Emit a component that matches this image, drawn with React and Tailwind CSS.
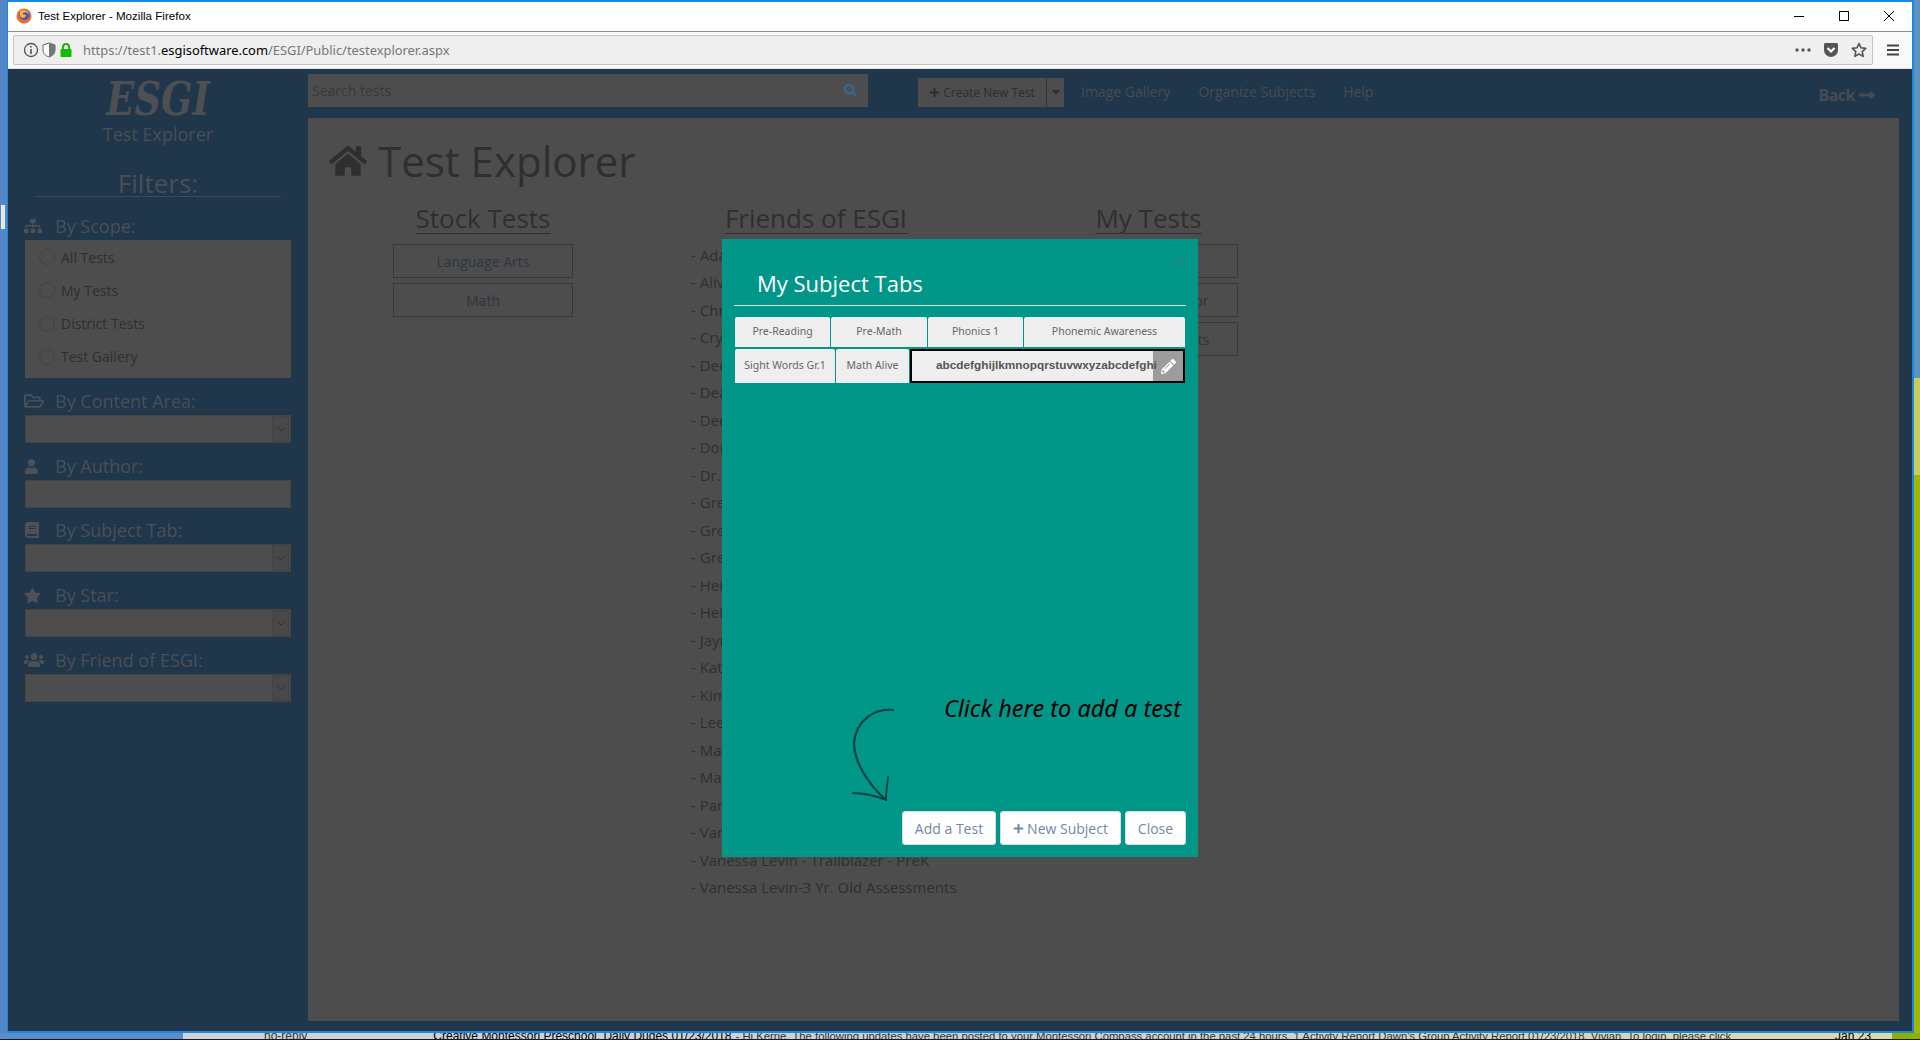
import React from "react";
import { FaSitemap, FaRegFolderOpen, FaUser, FaBook, FaStar, FaUsers, FaHome, FaSearch, FaPlus, FaPencilAlt, FaLongArrowAltRight } from "react-icons/fa";

const friends = ["Adam", "Alivia", "Christine", "Crystal", "Deedee", "Deanna", "Deena", "Donna", "Dr. Jean", "Greg", "Gretchen", "Greta", "Heidi", "Heidi", "Jayme", "Katie", "Kim", "Lee", "Mary", "Marsha", "Pam", "Vanessa"];

function Caret() {
  return (
    <div className="ml-auto w-[17px] h-[26px] border border-[#434343] bg-[#484848] flex items-center justify-center">
      <svg width="8" height="5" viewBox="0 0 8 5" fill="none" stroke="#2f2f2f" strokeWidth="1"><path d="M0.5 0.5 4 4 7.5 0.5" /></svg>
    </div>
  );
}

function Label({ icon, text, h = "h-[37px]" }) {
  return (
    <div className={`${h} flex items-end pb-[2px] pl-[16px]`}>
      <div className="flex items-center h-[24px] text-[18px] leading-[24px] text-[#4b4f55]">
        <span className="w-[31px] flex text-[#4d5155]">{icon}</span>
        {text}
      </div>
    </div>
  );
}

function Select() {
  return (
    <div className="ml-[17px] w-[266px] h-[28px] border border-[#434343] bg-[#4d4d4d] flex items-center pr-px">
      <Caret />
    </div>
  );
}

function OutlineButton({ children }) {
  return (
    <div className="w-[180px] h-[34px] mb-[5px] border border-[#2f3a45] flex items-center justify-center text-[14px] text-[#2c3640] whitespace-nowrap overflow-hidden">
      {children}
    </div>
  );
}

function Tab({ w, h, children }) {
  return (
    <div style={{ width: w, height: h }} className="bg-[#eeeeee] rounded-t-[2px] flex items-center justify-center font-['Noto_Sans',sans-serif] text-[10.5px] text-[#666666] whitespace-nowrap">
      {children}
    </div>
  );
}

function FooterButton({ w, children }) {
  return (
    <div style={{ width: w }} className="h-[34px] bg-white rounded-[3px] border border-[#d6dfe6] flex items-center justify-center gap-[3px] text-[14px] text-[#6d8aa6]">
      {children}
    </div>
  );
}

export default function App() {
  return (
    <div className="w-[1920px] h-[1040px] overflow-hidden relative flex flex-col font-['Open_Sans',sans-serif]">
      <div className="flex h-[1033px]">
        {/* left edge of the window behind */}
        <div className="w-[7px] bg-[#5387c6] pt-[205px]">
          <div className="ml-px w-[4px] h-[24px] bg-[#e8e8e8]" />
        </div>

        <div className="w-[1907px] flex flex-col border-l border-r-2 border-b-2 border-[#1a86e0]">
          <div className="h-[2px] bg-[#1a86e0]" />
          {/* title bar */}
          <div className="h-[30px] bg-white border-b border-[#8c8c8c] flex items-center pl-[8px] pr-[17px] pb-px font-['Liberation_Sans',sans-serif] text-[11.6px] text-black">
            <svg width="16" height="16" viewBox="0 0 16 16" className="mr-[6px]">
              <circle cx="8" cy="8" r="7.5" fill="#f2682a" />
              <circle cx="8.5" cy="7" r="5" fill="#3b5fc9" />
              <path d="M4 3 C7 1 12 2 13 6 C11 4 8 4 7 5 C6 6 8 7 10 7 C10 10 6 11 4 8 Z" fill="#ffb52c" />
            </svg>
            Test Explorer - Mozilla Firefox
            <svg width="12" height="12" viewBox="0 0 12 12" className="ml-auto" stroke="#000" fill="none"><path d="M1 6.5H11" /></svg>
            <svg width="12" height="12" viewBox="0 0 12 12" className="ml-[33px]" stroke="#000" fill="none"><rect x="1.5" y="1.5" width="9" height="9" /></svg>
            <svg width="12" height="12" viewBox="0 0 12 12" className="ml-[33px]" stroke="#000" fill="none"><path d="M1 1 11 11M11 1 1 11" /></svg>
          </div>
          {/* toolbar */}
          <div className="h-[37px] bg-[#f9f9fa] border-b border-[#e2e2e2] flex items-center pl-[5px]">
            <div className="w-[1860px] h-[30px] bg-[#efefef] border border-[#c4c4c4] rounded-[2px] flex items-center pl-[9px] pr-[5px] text-[12.9px] font-['Noto_Sans',sans-serif] text-[#74777c]">
              <svg width="16" height="16" viewBox="0 0 16 16" fill="none" stroke="#555"><circle cx="8" cy="8" r="6.5" strokeWidth="1.3" /><path d="M8 7V12M8 4V5.5" strokeWidth="1.6" /></svg>
              <svg width="14" height="16" viewBox="0 0 14 16" className="ml-[3px]"><path d="M7 1 L13 3 V8 C13 12 10 14 7 15 C4 14 1 12 1 8 V3 Z" fill="#fff" stroke="#666" /><path d="M7 1 L13 3 V8 C13 12 10 14 7 15 Z" fill="#777" /></svg>
              <svg width="14" height="16" viewBox="0 0 14 16" className="ml-[3px]"><path d="M4 7V5a3 3 0 0 1 6 0V7" fill="none" stroke="#12bc00" strokeWidth="2" /><rect x="1.5" y="7" width="11" height="8" rx="1" fill="#12bc00" /></svg>
              <span className="ml-[10px] pt-[2px]">https://test1.<span className="text-black">esgisoftware.com</span>/ESGI/Public/testexplorer.aspx</span>
              <svg width="16" height="4" viewBox="0 0 16 4" className="ml-auto" fill="#555"><circle cx="2" cy="2" r="1.7" /><circle cx="8" cy="2" r="1.7" /><circle cx="14" cy="2" r="1.7" /></svg>
              <svg width="16" height="16" viewBox="0 0 16 16" className="ml-[12px]"><path d="M1 2.5C1 1.7 1.7 1 2.5 1H13.5C14.3 1 15 1.7 15 2.5V8C15 12 11.5 15 8 15S1 12 1 8Z" fill="#555" /><path d="M4.5 6 8 9.5 11.5 6" fill="none" stroke="#fff" strokeWidth="2.2" /></svg>
              <svg width="16" height="16" viewBox="0 0 16 16" className="ml-[12px]" fill="none" stroke="#555" strokeWidth="1.6"><path d="M8 1.5 10 5.8 14.7 6.4 11.2 9.6 12.2 14.4 8 12 3.8 14.4 4.8 9.6 1.3 6.4 6 5.8Z" strokeLinejoin="round" /></svg>
            </div>
            <svg width="14" height="14" viewBox="0 0 14 14" className="ml-[13px]" stroke="#444" strokeWidth="2"><path d="M1 2.5H13M1 7H13M1 11.5H13" /></svg>
          </div>

          {/* page, dimmed by the open dialog */}
          <div className="flex-1 bg-[#1f364b] flex min-h-0">
            <aside className="w-[300px] flex flex-col">
              <div className="h-[48px] mt-[6px] flex items-center justify-center font-['DejaVu_Serif',serif] font-bold italic text-[46px] scale-x-[0.8] text-[#4d4f52] leading-none">ESGI</div>
              <div className="h-[22px] flex items-center justify-center text-[18px] text-[#4b4f55]">Test Explorer</div>
              <div className="h-[52px] mx-[27px] border-b border-[#3f4a55] flex items-end justify-center text-[26px] leading-[26px] text-[#4b4f55]">Filters:</div>
              <Label h="h-[43px]" icon={<FaSitemap size={18} />} text="By Scope:" />
              <div className="ml-[17px] w-[266px] h-[138px] bg-[#4d4d4d] flex flex-col gap-[13.3px] pt-[7px] pl-[14px] text-[14px] text-[#2f2f2f]">
                {["All Tests", "My Tests", "District Tests", "Test Gallery"].map((t) => (
                  <div key={t} className="flex items-center h-[20px]">
                    <span className="w-[16px] h-[16px] rounded-full border border-[#434343] mr-[6px]" />
                    {t}
                  </div>
                ))}
              </div>
              <Label icon={<FaRegFolderOpen size={20} />} text="By Content Area:" />
              <Select />
              <Label icon={<FaUser size={15} />} text="By Author:" />
              <div className="ml-[17px] w-[266px] h-[28px] border border-[#434343] bg-[#4d4d4d]" />
              <Label h="h-[36px]" icon={<FaBook size={16} />} text="By Subject Tab:" />
              <Select />
              <Label icon={<FaStar size={17} />} text="By Star:" />
              <Select />
              <Label icon={<FaUsers size={20} />} text="By Friend of ESGI:" />
              <Select />
            </aside>

            <main className="flex flex-col">
              {/* top nav */}
              <div className="h-[49px] flex pt-[5px]">
                <div className="w-[560px] h-[33px] bg-[#4d4d4d] flex items-center px-[4px] text-[14px] text-[#37393c]">
                  Search tests
                  <FaSearch size={13} className="ml-auto mr-[7px] text-[#2f6c9c]" />
                </div>
                <div className="ml-[50px] mt-[4px] w-[128px] h-[29px] bg-[#4d4d4d] flex items-center justify-center gap-[3px] text-[12px] text-[#2b2e32]">
                  <FaPlus size={11} /> Create New Test
                </div>
                <div className="ml-px mt-[4px] w-[17px] h-[29px] bg-[#4d4d4d] flex items-center justify-center">
                  <svg width="8" height="5" viewBox="0 0 8 5" fill="#2f2f2f"><path d="M0 0H8L4 5Z" /></svg>
                </div>
                <div className="ml-[17px] h-[34px] flex items-center text-[14px] text-[#484c52] gap-[28px]">
                  <span>Image Gallery</span>
                  <span>Organize Subjects</span>
                  <span>Help</span>
                </div>
                <div className="ml-[445px] mt-[3px] h-[36px] flex items-center font-bold text-[16px] tracking-[-0.5px] text-[#484c52] gap-[3px]">
                  Back <FaLongArrowAltRight size={18} />
                </div>
              </div>
              {/* content panel */}
              <div className="w-[1591px] h-[903px] bg-[#4d4d4d] text-[#2f2f2f]">
                <h1 className="pt-[3px] pl-[21px] h-[83px] flex items-center text-[42px] leading-[48px] font-normal">
                  <FaHome size={38} className="mr-[11px]" /> Test Explorer
                </h1>
                <div className="flex">
                  <div className="ml-[85px] w-[180px]">
                    <div className="h-[43px] text-center text-[26px] leading-[34px] underline underline-offset-[5px] decoration-1">Stock Tests</div>
                    <OutlineButton>Language Arts</OutlineButton>
                    <OutlineButton>Math</OutlineButton>
                  </div>
                  <div className="ml-[118px] w-[250px]">
                    <div className="h-[40px] text-center text-[26px] leading-[34px] underline underline-offset-[5px] decoration-1">Friends of ESGI</div>
                    <ul className="text-[15px] text-[#2f2f2f]">
                      {friends.map((f, i) => (
                        <li key={i} className="h-[27.5px] flex items-center whitespace-pre">- {f}</li>
                      ))}
                      <li className="h-[27.5px] flex items-center whitespace-pre">- Vanessa Levin - Trailblazer - PreK</li>
                      <li className="h-[27.5px] flex items-center whitespace-pre">- Vanessa Levin-3 Yr. Old Assessments</li>
                    </ul>
                  </div>
                  <div className="ml-[117px] w-[181px]">
                    <div className="h-[43px] text-center text-[26px] leading-[34px] underline underline-offset-[5px] decoration-1">My Tests</div>
                    <OutlineButton>Phonics</OutlineButton>
                    <OutlineButton>Sight Words Editor</OutlineButton>
                    <OutlineButton>Kindergarten Tests</OutlineButton>
                  </div>
                </div>
              </div>
            </main>
          </div>
        </div>

        {/* desktop wallpaper behind the window */}
        <div className="w-[6px] flex flex-col">
          <div className="h-[378px] bg-[#5c93c0]" />
          <div className="h-[97px] bg-[#c8cc5a]" />
          <div className="flex-1 bg-[#9fb800]" />
        </div>
      </div>

      {/* window behind, cut off at the bottom */}
      <div className="h-[7px] overflow-hidden flex border-b border-[#1a1a1a] bg-gradient-to-r from-[#cfd4da] via-[#c5d0e0] to-[#dcd8b0] font-['Liberation_Sans',sans-serif] text-[12px] leading-[7px] text-[#333] whitespace-nowrap">
        <div className="w-[183px] shrink-0 bg-[#5b8bc9]" />
        <span className="ml-[81px] shrink-0">no-reply</span>
        <span className="ml-[126px] shrink-0 text-black">Creative Montessori Preschool. Daily Dudes 01/23/2018</span>
        <span className="ml-[4px] shrink-0 text-[11.3px]">- Hi Kerrie. The following updates have been posted to your Montessori Compass account in the past 24 hours. 1 Activity Report Dawn's Group Activity Report 01/23/2018. Vivian. To login, please click</span>
        <span className="ml-[104px] shrink-0 text-black">Jan 23</span>
        <div className="ml-auto w-[28px] shrink-0 bg-[#8fb000]" />
      </div>

      {/* My Subject Tabs dialog */}
      <div className="absolute left-[722px] top-[239px] w-[476px] h-[618px] bg-[#009688] flex flex-col">
        <svg width="11" height="11" viewBox="0 0 11 11" className="absolute right-[13px] top-[17px]" stroke="#2a7f78" strokeWidth="1.2"><path d="M0.5 0.5 10.5 10.5M10.5 0.5 0.5 10.5" /></svg>
        <div className="pt-[29px] pl-[35px] h-[66px] text-[22px] leading-[30px] text-white">My Subject Tabs</div>
        <div className="mx-[12px] h-[8px] border-t border-[#cfe6e3]" />
        <div className="mx-[13px] mt-[4px] flex gap-px">
          <Tab w={95} h={30}>Pre-Reading</Tab>
          <Tab w={96} h={30}>Pre-Math</Tab>
          <Tab w={95} h={30}>Phonics 1</Tab>
          <Tab w={161} h={30}>Phonemic Awareness</Tab>
        </div>
        <div className="mx-[13px] mt-[2px] flex gap-px">
          <Tab w={100} h={34}>Sight Words Gr.1</Tab>
          <Tab w={73} h={34}>Math Alive</Tab>
          <div className="w-[275px] h-[34px] border-2 border-black bg-[#eeeeee] flex items-center relative">
            <div className="absolute right-0 top-0 bottom-0 w-[30px] bg-[#9c9c9c] flex items-center justify-center">
              <FaPencilAlt size={15} className="text-white" />
            </div>
            <span className="ml-[24px] relative font-['Liberation_Sans',sans-serif] font-bold text-[11.8px] text-[#555555] whitespace-nowrap">abcdefghijlkmnopqrstuvwxyzabcdefghi</span>
          </div>
        </div>
        <div className="mt-[309px] flex h-[119px]">
          <svg width="46" height="100" viewBox="0 0 46 100" className="ml-[128px] mt-[16px]" fill="none" stroke="#0b3f40" strokeLinecap="round">
            <path d="M43 2 C25 0 6 12 4 35 C4 55 20 78 36 92" strokeWidth="2.2" />
            <path d="M3 85 C14 85 26 88 36 92 C36 85 37 78 38 69" strokeWidth="1.8" />
          </svg>
          <div className="ml-auto pr-[17px] h-[34px] flex items-center text-[23.5px] italic text-black whitespace-nowrap font-['Noto_Sans',sans-serif]">Click here to add a test</div>
        </div>
        <div className="mx-[12px] flex justify-end gap-[4px]">
          <FooterButton w={94}>Add a Test</FooterButton>
          <FooterButton w={121}><FaPlus size={11} /> New Subject</FooterButton>
          <FooterButton w={61}>Close</FooterButton>
        </div>
      </div>
    </div>
  );
}
